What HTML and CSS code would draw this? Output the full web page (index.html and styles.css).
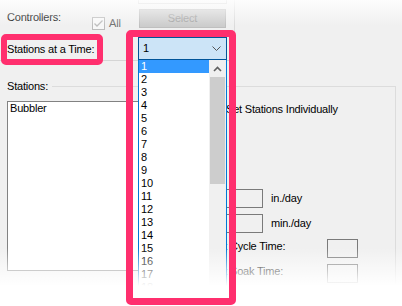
FILE: index.html
```html
<!DOCTYPE html>
<html lang="en">
<head>
  <meta charset="UTF-8">
  <meta name="viewport" content="width=device-width, initial-scale=1.0">
  <title>Stations at a Time</title>
  <link rel="stylesheet" href="styles.css">
</head>
<body>

<div class="form">
  <div class="top-panel">
    <div class="row row-controllers">
      <span class="lbl lbl-controllers">Controllers:</span>
      <label class="check-all">
        <span class="checkbox disabled">
          <svg width="11" height="11" viewBox="0 0 11 11"><path d="M1.5 5.5 L4 8 L9.5 2.5" fill="none" stroke="#bcbcbc" stroke-width="1.3"/></svg>
        </span>
        <span class="check-text">All</span>
      </label>
      <div class="select-col">
        <div class="edge-box"></div>
        <button class="btn-select" disabled>Select</button>
      </div>
    </div>
    <div class="row row-time">
      <span class="lbl lbl-time">Stations at a Time:</span>
      <div class="combo">
        <span class="combo-value">1</span>
        <svg class="combo-arrow" width="9" height="5" viewBox="0 0 9 5"><path d="M0.5 0.5 L4.5 4.5 L8.5 0.5" fill="none" stroke="#555" stroke-width="1"/></svg>
      </div>
    </div>
  </div>

  <div class="group">
    <div class="group-title">Stations:</div>
    <div class="group-body">
      <div class="listbox">
        <div class="list-item">Bubbler</div>
      </div>
      <div class="settings">
        <label class="set-row"><span class="checkbox"></span>Set Stations Individually</label>
        <div class="field-row first">
          <span class="tb wide"></span>
          <span class="unit">in./day</span>
        </div>
        <div class="field-row">
          <span class="tb wide"></span>
          <span class="unit">min./day</span>
        </div>
        <div class="field-row">
          <span class="field-label">Max Cycle Time:</span>
          <span class="tb small"></span>
        </div>
        <div class="field-row">
          <span class="field-label">Max Soak Time:</span>
          <span class="tb small"></span>
        </div>
      </div>
    </div>
  </div>
</div>

<!-- open dropdown of the combo -->
<div class="dropdown">
  <div class="options">
    <div class="option selected">1</div>
    <div class="option">2</div>
    <div class="option">3</div>
    <div class="option">4</div>
    <div class="option">5</div>
    <div class="option">6</div>
    <div class="option">7</div>
    <div class="option">8</div>
    <div class="option">9</div>
    <div class="option">10</div>
    <div class="option">11</div>
    <div class="option">12</div>
    <div class="option">13</div>
    <div class="option">14</div>
    <div class="option">15</div>
    <div class="option">16</div>
    <div class="option">17</div>
    <div class="option">18</div>
    <div class="option">19</div>
  </div>
  <div class="scrollbar">
    <div class="sb-up">
      <svg width="9" height="6" viewBox="0 0 9 6"><path d="M1 5 L4.5 1.5 L8 5" fill="none" stroke="#606060" stroke-width="1.6"/></svg>
    </div>
    <div class="sb-thumb"></div>
  </div>
</div>

<div class="fade-top"></div>
<div class="fade-bottom"></div>

<!-- annotation boxes -->
<div class="mark mark-label"></div>
<div class="mark mark-combo"></div>

</body>
</html>
```

FILE: styles.css
```css
/* Pagina */
body {
  margin: 0;
  width: 402px;
  height: 306px;
  overflow: hidden;
  position: relative;
  background-color: #f0f0f0;
  font-family: "Liberation Sans", Arial, sans-serif;
  font-size: 11px;
  letter-spacing: -0.2px;
  line-height: 13px;
  color: #000;
}
.top-panel {
  width: 227px;
  height: 60px;
  padding-left: 7px;
  border-right: 1px solid #dadada;
  border-bottom: 1px solid #d5d5d5;
}
.row {
  display: flex;
  align-items: flex-start;
  height: 30px;
}
.lbl-controllers {
  width: 85px;
  margin-top: 11px;
}
.check-all {
  width: 47px;
  display: flex;
  align-items: center;
  margin-top: 17px;
}
.checkbox {
  width: 13px;
  height: 13px;
  box-sizing: border-box;
  border: 1px solid #333;
  background: #fff;
  display: flex;
  align-items: center;
  justify-content: center;
  flex-shrink: 0;
}
.checkbox.disabled {
  border-color: #bcbcbc;
  background: #f7f7f7;
}
.check-text {
  margin-left: 4px;
  color: #6d6d6d;
}
.select-col {
  width: 87px;
  display: flex;
  flex-direction: column;
}
.edge-box {
  width: 89px;
  height: 4px;
  margin-left: -1px;
  box-sizing: border-box;
  border: 1px solid #c8c8c8;
  border-top: none;
}
.btn-select {
  margin-top: 5px;
  height: 19px;
  padding: 0;
  border: 1px solid #bfbfbf;
  background: #cccccc;
  color: #a0a0a0;
  font: inherit;
  letter-spacing: inherit;
}
.lbl-time {
  width: 131px;
  margin-top: 13px;
}
.combo {
  width: 89px;
  height: 23px;
  margin-top: 7px;
  box-sizing: border-box;
  border: 1px solid #005499;
  background: #cce4f7;
  display: flex;
  align-items: center;
  padding-left: 4px;
}
.combo-arrow {
  margin-left: auto;
  margin-right: 5px;
}

/* Grupo Stations */
.group {
  margin-top: 25px;
  margin-right: 6px;
  height: 230px;
  border-top: 1px solid #dcdcdc;
  border-right: 1px solid #dcdcdc;
}
.group-title {
  width: fit-content;
  margin-top: -7px;
  padding: 0 4px 0 7px;
  background: #f0f0f0;
}
.group-body {
  display: flex;
  align-items: flex-start;
  padding-left: 7px;
  margin-top: 8px;
}
.listbox {
  width: 190px;
  height: 170px;
  box-sizing: border-box;
  border: 1px solid #828282;
  background: #fff;
}
.list-item {
  padding-left: 2px;
}
.settings {
  margin-left: 13px;
  display: flex;
  flex-direction: column;
  gap: 6px;
}
.set-row {
  display: flex;
  align-items: center;
  gap: 3px;
  margin-top: 2px;
}
.field-row {
  display: flex;
  align-items: center;
  height: 19px;
}
.field-row.first {
  margin-top: 67px;
}
.tb {
  height: 19px;
  box-sizing: border-box;
  border: 1px solid #7a7a7a;
  background: #f0f0f0;
}
.tb.wide {
  width: 40px;
  margin-left: 13px;
}
.tb.small {
  width: 31px;
}
.unit {
  margin-left: 8px;
}
.field-label {
  width: 120px;
  margin-left: -3px;
  align-self: flex-start;
  margin-top: 1px;
}

/* Lista aberta do combo */
.dropdown {
  position: absolute;
  left: 138px;
  top: 60px;
  width: 89px;
  height: 260px;
  box-sizing: border-box;
  border-left: 1px solid #0078d7;
  border-right: 1px solid #0078d7;
  background: #fff;
  display: flex;
}
.options {
  width: 70px;
}
.option {
  height: 13px;
  padding-left: 2px;
}
.option.selected {
  background: #3399ff;
  color: #fff;
}
.scrollbar {
  width: 17px;
  background: #f0f0f0;
}
.sb-up {
  height: 17px;
  display: flex;
  align-items: center;
  justify-content: center;
}
.sb-thumb {
  height: 107px;
  margin: 0 1px;
  background: #cdcdcd;
}

/* Esmaecimento das bordas */
.fade-top {
  position: absolute;
  left: 0;
  top: 0;
  width: 100%;
  height: 26px;
  background: linear-gradient(rgba(255, 255, 255, 0.85), rgba(255, 255, 255, 0));
}
.fade-bottom {
  position: absolute;
  left: 0;
  top: 248px;
  width: 100%;
  height: 58px;
  background: linear-gradient(rgba(255, 255, 255, 0), #fff 38px);
}

/* Marcas de destaque */
.mark {
  position: absolute;
  box-sizing: border-box;
  border-style: solid;
  border-color: #ff2f6e;
  border-radius: 5px;
}
.mark-label {
  left: 1px;
  top: 34px;
  width: 102px;
  height: 31px;
  border-width: 6px;
}
.mark-combo {
  left: 126px;
  top: 30px;
  width: 110px;
  height: 275px;
  border-width: 7px;
}
```
